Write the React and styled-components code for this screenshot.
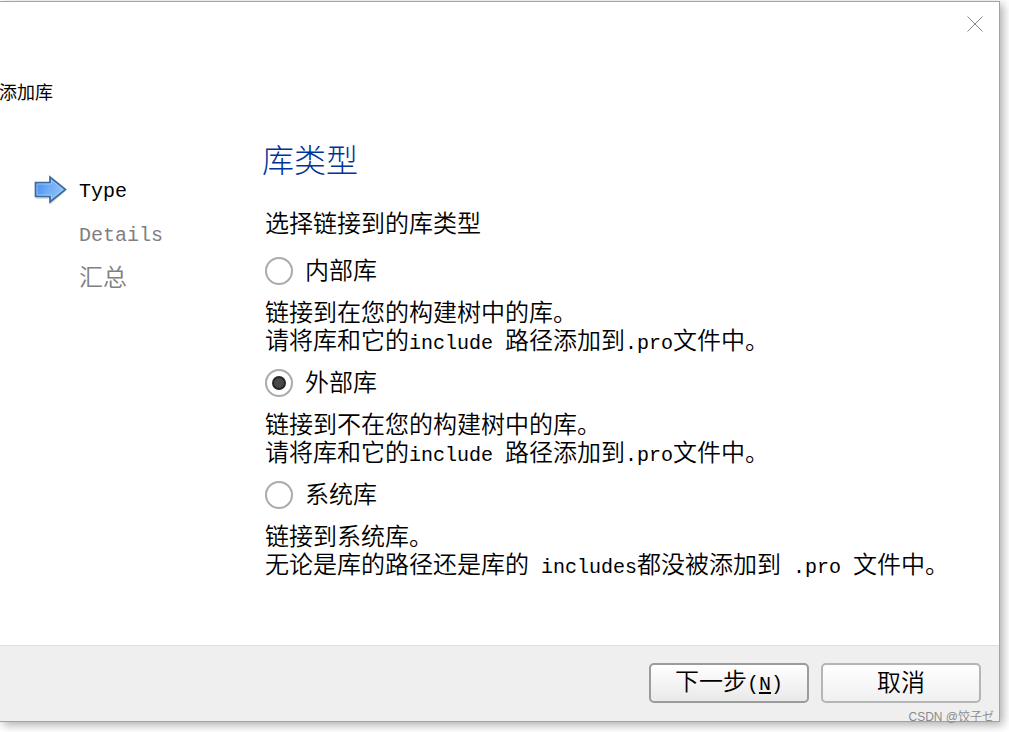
import { Fragment, useState } from "react";
import styled, { createGlobalStyle } from "styled-components";

const steps = [
  { name: "Type", active: true },
  { name: "Details" },
  { name: "汇总" },
];

const libraryTypes = [
  {
    id: "internal",
    label: "内部库",
    lines: ["链接到在您的构建树中的库。", "请将库和它的include 路径添加到.pro文件中。"],
  },
  {
    id: "external",
    label: "外部库",
    lines: ["链接到不在您的构建树中的库。", "请将库和它的include 路径添加到.pro文件中。"],
  },
  {
    id: "system",
    label: "系统库",
    lines: ["链接到系统库。", "无论是库的路径还是库的 includes都没被添加到 .pro 文件中。"],
  },
];

// Latin runs are half as wide as a Chinese character
const Mixed = ({ text }) =>
  text
    .split(/([\x20-\x7e]+)/)
    .map((part, i) =>
      i % 2 ? <Latin key={i}>{part}</Latin> : <Fragment key={i}>{part}</Fragment>
    );

const StepArrow = () => (
  <ArrowIcon viewBox="0 0 34 32" aria-hidden="true">
    <defs>
      <linearGradient id="arrowFill" x1="0" y1="0" x2="1" y2="0.3">
        <stop offset="0" stopColor="#3f8ae8" />
        <stop offset="0.5" stopColor="#6cabf5" />
        <stop offset="1" stopColor="#8fc0f8" />
      </linearGradient>
    </defs>
    <path d="M2 10H16V4L32 17L16 31V25H2Z" fill="#000" opacity="0.14" />
    <path
      d="M1.5 8.5H16V3L31.5 15.5L16 28V22.5H1.5Z"
      fill="url(#arrowFill)"
      stroke="#3b6a9f"
      strokeWidth="1.7"
    />
    <path
      d="M3 10H17.5V6.2L29 15.5L17.5 24.8V21H3Z"
      fill="none"
      stroke="#b5d5fa"
      strokeWidth="1"
      opacity="0.65"
    />
  </ArrowIcon>
);

const App = () => {
  const [selected, setSelected] = useState("external");
  return (
    <>
      <GlobalStyle />
      <Dialog>
        <TitleBar>
          <CloseButton type="button" aria-label="关闭">
            <svg width="16" height="16" viewBox="0 0 16 16">
              <path d="M0.5 0.5L15.5 15.5M15.5 0.5L0.5 15.5" stroke="#858585" />
            </svg>
          </CloseButton>
        </TitleBar>
        <Caption>添加库</Caption>
        <Content>
          <Steps>
            {steps.map((step) => (
              <Step key={step.name} $active={step.active}>
                <ArrowSlot>{step.active && <StepArrow />}</ArrowSlot>
                <span>
                  <Mixed text={step.name} />
                </span>
              </Step>
            ))}
          </Steps>
          <Page>
            <Title>库类型</Title>
            <Options>
              <Legend>选择链接到的库类型</Legend>
              {libraryTypes.map((type) => (
                <Option key={type.id}>
                  <OptionLabel>
                    <Radio
                      type="radio"
                      name="library"
                      checked={selected === type.id}
                      onChange={() => setSelected(type.id)}
                    />
                    {type.label}
                  </OptionLabel>
                  <Description>
                    {type.lines.map((line) => (
                      <Line key={line}>
                        <Mixed text={line} />
                      </Line>
                    ))}
                  </Description>
                </Option>
              ))}
            </Options>
          </Page>
        </Content>
        <Footer>
          <Button type="button" $primary>
            下一步
            <Latin>
              (<Mnemonic>N</Mnemonic>)
            </Latin>
          </Button>
          <Button type="button">取消</Button>
        </Footer>
        <Watermark>CSDN @饺子ゼ</Watermark>
      </Dialog>
    </>
  );
};

const GlobalStyle = createGlobalStyle`
  * {
    box-sizing: border-box;
  }
  body {
    margin: 0;
    background: #fff;
    color: #000;
    font-family: "Liberation Sans", "Noto Sans CJK SC", sans-serif;
    font-size: 24px;
    font-weight: 350;
    line-height: 28px;
    overflow: hidden;
  }
`;

const Dialog = styled.main`
  position: relative;
  display: flex;
  flex-direction: column;
  min-height: calc(100vh - 11px);
  margin: 1px 9px 10px 0;
  background: #fff;
  border: 1px solid #a3a3a3;
  border-left: none;
  box-shadow: 3px 3px 9px rgba(0, 0, 0, 0.32);
`;

const TitleBar = styled.header`
  display: flex;
  justify-content: flex-end;
  padding: 14px 16px 0 0;
`;

const CloseButton = styled.button`
  display: flex;
  padding: 0;
  border: none;
  background: none;
`;

const Caption = styled.h1`
  margin: 49px 0 0 -1px;
  font-size: 18px;
  font-weight: 400;
  line-height: 24px;
`;

const Content = styled.div`
  display: flex;
  flex: 1;
`;

const Steps = styled.ol`
  width: 262px;
  flex-shrink: 0;
  display: flex;
  flex-direction: column;
  gap: 16px;
  margin: 71px 0 0;
  padding: 0 0 0 34px;
  list-style: none;
`;

const Step = styled.li`
  display: flex;
  align-items: center;
  height: 28px;
  color: ${({ $active }) => ($active ? "#000" : "#808080")};
`;

const ArrowSlot = styled.span`
  display: flex;
  width: 45px;
`;

const ArrowIcon = styled.svg`
  width: 34px;
  height: 32px;
`;

const Page = styled.section`
  flex: 1;
  padding: 36px 16px 24px 0;
`;

const Title = styled.h2`
  margin: 0;
  color: #003399;
  font-size: 32px;
  font-weight: 300;
  line-height: 40px;
`;

const Options = styled.fieldset`
  display: flex;
  flex-direction: column;
  gap: 14px;
  margin: 29px 0 0;
  padding: 0 0 0 3px;
  border: none;
`;

const Legend = styled.legend`
  margin-bottom: 19px;
  padding: 0;
`;

const Option = styled.div`
  display: flex;
  flex-direction: column;
  gap: 14px;
`;

const OptionLabel = styled.label`
  display: flex;
  align-items: center;
  gap: 12px;
`;

const Radio = styled.input`
  appearance: none;
  display: grid;
  place-items: center;
  width: 28px;
  height: 28px;
  margin: 0;
  border: 2px solid #ababab;
  border-radius: 50%;
  background: #fff;

  &:checked::before {
    content: "";
    box-sizing: border-box;
    width: 14px;
    height: 14px;
    border: 2px solid #262626;
    border-radius: 50%;
    background: #484848;
  }
`;

const Description = styled.p`
  margin: 0;
`;

const Line = styled.span`
  display: block;
  height: 28px;
`;

const Latin = styled.span`
  font-family: "Liberation Mono", monospace;
  font-size: 20px;
`;

const Mnemonic = styled.u`
  text-decoration-thickness: 2px;
  text-underline-offset: 2px;
`;

const Footer = styled.footer`
  display: flex;
  justify-content: flex-end;
  gap: 12px;
  padding: 17px 18px 18px;
  background: #efefef;
  border-top: 1px solid #dfdfdf;
`;

const Button = styled.button`
  width: 160px;
  height: 40px;
  padding: 0;
  border: 2px solid ${({ $primary }) => ($primary ? "#9c9c9c" : "#b5b5b5")};
  border-radius: 5px;
  background: linear-gradient(
    #fff,
    ${({ $primary }) => ($primary ? "#e9e9e9" : "#f0f0f0")}
  );
  color: #000;
  font: inherit;
`;

const Watermark = styled.small`
  position: absolute;
  right: 5px;
  bottom: -4px;
  color: #8a8a8a;
  font-family: "Liberation Sans", "Noto Sans CJK SC", sans-serif;
  font-size: 12px;
  font-weight: 350;
  line-height: 16px;
`;

export default App;
